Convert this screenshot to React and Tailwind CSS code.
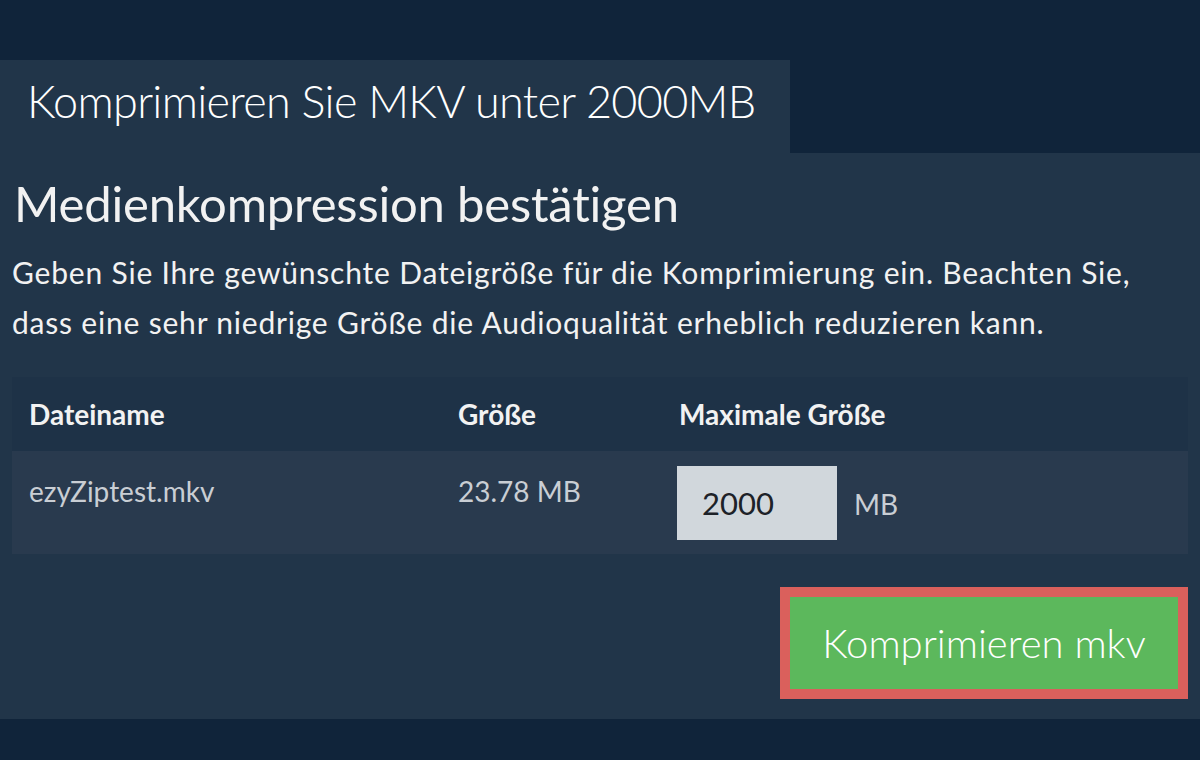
import { useState } from "react";

export default function App() {
  const [maxSize, setMaxSize] = useState("2000");

  return (
    <div className="min-h-[760px] w-full bg-[#10243a] pt-[60px] font-['Lato',sans-serif]">
      <div className="flex h-[93px] w-[790px] items-center bg-[#213549] pb-[10px] pl-[27px]">
        <h1 className="text-[45px] font-light leading-none tracking-[-0.7px] text-white">
          Komprimieren Sie MKV unter 2000MB
        </h1>
      </div>

      <div className="bg-[#213549] px-[12px] pb-[20px] pt-[18px]">
        <h2 className="pl-[2px] text-[49px] font-normal leading-[64px] tracking-[-0.2px] text-[#f2f2f2]">
          Medienkompression bestätigen
        </h2>
        <p className="mt-[12px] text-[30px] leading-[50px] tracking-[0.8px] text-[#f2f2f2]">
          Geben Sie Ihre gewünschte Dateigröße für die Komprimierung ein. Beachten Sie,
          <br />
          dass eine sehr niedrige Größe die Audioqualität erheblich reduzieren kann.
        </p>

        <div className="mt-[30px]">
          <div className="grid h-[74px] grid-cols-[429px_221px_1fr] items-center bg-[#1e3247] text-[28px] font-bold text-[#f2f2f2]">
            <div className="pl-[17px]">Dateiname</div>
            <div className="pl-[17px]">Größe</div>
            <div className="pl-[17px]">Maximale Größe</div>
          </div>
          <div className="grid h-[103px] grid-cols-[429px_221px_1fr] bg-[#293a4e] text-[28px] text-[#c9ced4]">
            <div className="pl-[17px] pt-[19px]">ezyZiptest.mkv</div>
            <div className="pl-[17px] pt-[19px]">23.78 MB</div>
            <div className="flex items-center gap-[17px] pl-[15px]">
              <input
                type="text"
                value={maxSize}
                onChange={(e) => setMaxSize(e.target.value)}
                className="h-[74px] w-[160px] bg-[#d1d7dc] pl-[25px] text-[31px] text-[#1d2228] outline-none"
              />
              <span className="pt-[2px] text-[28px] text-[#c9ced4]">MB</span>
            </div>
          </div>
        </div>

        <div className="mt-[33px] flex justify-end">
          <button className="h-[112px] w-[408px] border-[10px] border-[#da605c] bg-[#5cb85c] text-[40px] font-light text-white">
            Komprimieren mkv
          </button>
        </div>
      </div>
    </div>
  );
}
